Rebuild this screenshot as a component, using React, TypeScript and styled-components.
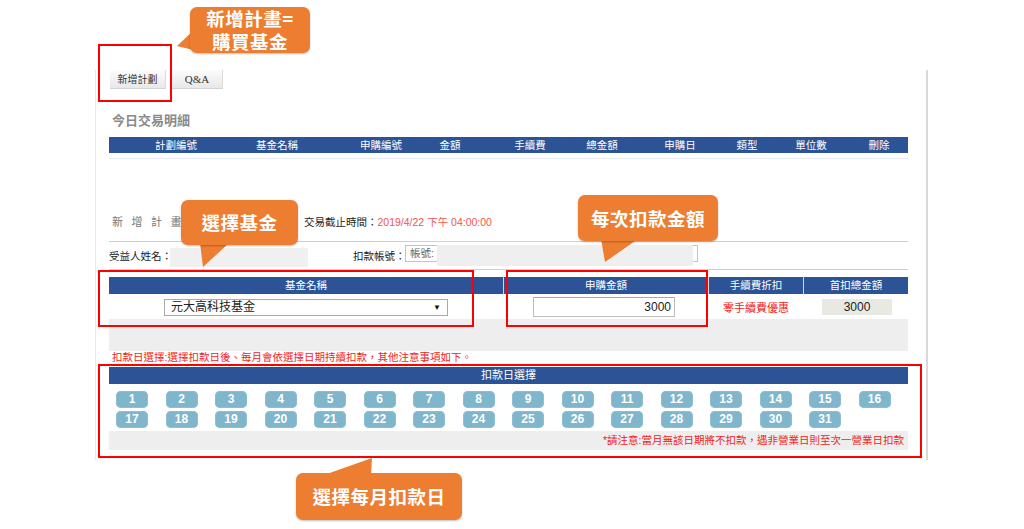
import React from "react";
import styled, { createGlobalStyle } from "styled-components";

const GlobalStyle = createGlobalStyle`
  body {
    margin: 0;
    background: #fff;
    font-family: "Liberation Sans", "Noto Sans CJK TC", sans-serif;
  }
`;

const BLUE = "#2b5396";
const ORANGE = "#ed7d31";

const todayCols: [string, number][] = [
  ["計劃編號", 58],
  ["基金名稱", 144],
  ["申購編號", 64],
  ["金額", 74],
  ["手續費", 86],
  ["總金額", 58],
  ["申購日", 98],
  ["類型", 36],
  ["單位數", 92],
  ["刪除", 44],
];

const days = Array.from({ length: 31 }, (_, i) => i + 1);

const Page = styled.div`
  position: relative;
  width: 1024px;
  height: 529px;
  overflow: hidden;
  box-sizing: border-box;
  padding-top: 70px;
  background: #fff;
`;

const Frame = styled.div`
  box-sizing: border-box;
  width: 833px;
  height: 390px;
  margin-left: 95px;
  padding: 0 18px 0 13px;
  border-left: 1px solid #e8e8e8;
  border-right: 2px solid #d8d8d8;
  display: flex;
  flex-direction: column;
`;

const Tabs = styled.div`
  display: flex;
  gap: 6px;
  height: 19px;
  margin-left: 1px;
`;

const Tab = styled.div<{ $w: number; $serif?: boolean }>`
  box-sizing: border-box;
  width: ${(p) => p.$w}px;
  height: 19px;
  background: linear-gradient(#fcfcfc, #e8e8e8);
  border-right: 1px solid #dcdcdc;
  border-bottom: 1px solid #d4d4d4;
  font-family: ${(p) =>
    p.$serif ? `"Liberation Serif", serif` : `"Liberation Sans", "Noto Sans CJK TC", sans-serif`};
  font-size: ${(p) => (p.$serif ? 11 : 10)}px;
  line-height: 19px;
  text-align: center;
  color: #333;
`;

const Title = styled.div`
  margin-top: 24px;
  font-size: 13px;
  line-height: 16px;
  font-weight: bold;
  color: #8a8a8a;
  padding-left: 3px;
`;

const BlueBar = styled.div`
  background: ${BLUE};
  color: #fff;
  font-size: 10.5px;
  height: 16px;
  line-height: 16px;
`;

const TodayHead = styled(BlueBar)`
  margin-top: 8px;
  display: grid;
  grid-template-columns: ${todayCols.map((c) => `${c[1]}px`).join(" ")};
  padding-left: 38px;
`;

const HeadCell = styled.div`
  text-align: center;
  white-space: nowrap;
`;

const EmptyRow = styled.div`
  height: 5px;
  border-bottom: 1px solid #e6ebf4;
`;

const SectionHead = styled.div`
  margin-top: 53px;
  display: flex;
  align-items: center;
  padding: 2px 0 11px;
  line-height: 16px;
  border-bottom: 1px solid #cfcfcf;
`;

const SectionTitle = styled.div`
  width: 192px;
  padding-left: 3px;
  font-size: 11px;
  letter-spacing: 8.5px;
  color: #777;
`;

const Deadline = styled.div`
  font-size: 10.5px;
  color: #222;
`;

const RedText = styled.span<{ $soft?: boolean }>`
  color: ${(p) => (p.$soft ? "#f2554d" : "#f21c1c")};
`;

const BeneRow = styled.div`
  height: 27px;
  display: flex;
  align-items: center;
  border-bottom: 1px solid #cfcfcf;
  font-size: 10.5px;
  color: #222;
`;

const Label = styled.div<{ $w: number; $ml?: number }>`
  width: ${(p) => p.$w}px;
  margin-left: ${(p) => p.$ml ?? 0}px;
  white-space: nowrap;
`;

const NameMask = styled.div`
  width: 138px;
  height: 19px;
  margin-top: 3px;
  background: #f0f0f0;
`;

const AccountInput = styled.div`
  position: relative;
  box-sizing: border-box;
  width: 293px;
  height: 17px;
  margin-top: -4px;
  border: 1px solid #c4c4c4;
  padding-left: 4px;
  line-height: 15px;
  color: #666;
  font-size: 10.5px;
`;

const AccountMask = styled.div`
  position: absolute;
  left: 31px;
  top: -1px;
  width: 256px;
  height: 21px;
  background: #efefef;
`;

const MainTable = styled.div`
  margin-top: 7px;
  display: flex;
  flex-direction: column;
`;

const mainCols = "394px 204px 94px 1fr";

const MainHead = styled(BlueBar)`
  display: grid;
  grid-template-columns: ${mainCols};
  gap: 1px;
  background: #ccd5e6;
  height: 17px;
  line-height: 17px;
`;

const MainHeadCell = styled.div`
  background: ${BLUE};
  text-align: center;
`;

const MainRow = styled.div`
  display: grid;
  grid-template-columns: ${mainCols};
  gap: 1px;
  height: 25px;
  align-items: center;
  justify-items: center;
`;

const SelectBox = styled.div`
  position: relative;
  box-sizing: border-box;
  width: 284px;
  height: 17px;
  border: 1px solid #a9a9a9;
  padding-left: 6px;
  font-size: 12px;
  line-height: 15px;
  color: #222;
  margin-top: 2px;

  &::after {
    content: "▼";
    position: absolute;
    right: 6px;
    top: 0;
    font-size: 8px;
    color: #111;
  }
`;

const AmountInput = styled.div`
  box-sizing: border-box;
  width: 142px;
  height: 20px;
  margin-right: 4px;
  border: 1px solid #bdbdbd;
  border-top-color: #a8a8a8;
  text-align: right;
  padding-right: 3px;
  font-size: 12px;
  line-height: 18px;
  color: #222;
`;

const FeeText = styled.div`
  font-size: 11px;
  color: #f21c1c;
`;

const TotalBox = styled.div`
  width: 70px;
  height: 16px;
  margin-left: 2px;
  background: #e9e9e4;
  text-align: center;
  font-size: 12px;
  line-height: 16px;
  color: #222;
`;

const GrayPanel = styled.div`
  height: 32px;
  background: #eeeeee;
`;

const Note = styled.div`
  height: 12px;
  padding-left: 3px;
  font-size: 10.5px;
  line-height: 12px;
  color: #f21c1c;
  white-space: nowrap;
`;

const DaySection = styled.div`
  margin-top: 4px;
  display: flex;
  flex-direction: column;
`;

const DayHead = styled(BlueBar)`
  height: 17px;
  line-height: 17px;
  text-align: center;
  font-size: 11px;
`;

const DayGrid = styled.div`
  display: grid;
  grid-template-columns: repeat(16, 1fr);
  grid-auto-rows: 17px;
  row-gap: 3px;
  padding: 7px 0 3px 7px;
`;

const DayButton = styled.div`
  width: 32px;
  height: 17px;
  border-radius: 5px;
  background: #80b6cc;
  box-shadow: inset 0 0 0 1px #8dbfd3;
  color: #fff;
  font-weight: bold;
  font-size: 12px;
  line-height: 17px;
  text-align: center;
`;

const DayFoot = styled.div`
  height: 19px;
  background: #eeeeee;
  text-align: right;
  padding-right: 4px;
  font-size: 10.5px;
  line-height: 19px;
  color: #f21c1c;
`;

const Highlight = styled.div<{ $x: number; $y: number; $w: number; $h: number }>`
  position: absolute;
  left: ${(p) => p.$x}px;
  top: ${(p) => p.$y}px;
  width: ${(p) => p.$w}px;
  height: ${(p) => p.$h}px;
  box-sizing: border-box;
  border: 2px solid #ff0000;
  pointer-events: none;
`;

const Tails = styled.svg`
  position: absolute;
  left: 0;
  top: 0;
  pointer-events: none;
`;

const Bubble = styled.div<{ $x: number; $y: number; $w: number; $h: number }>`
  position: absolute;
  left: ${(p) => p.$x}px;
  top: ${(p) => p.$y}px;
  width: ${(p) => p.$w}px;
  height: ${(p) => p.$h}px;
  box-sizing: border-box;
  border-radius: 7px;
  background: ${ORANGE};
  box-shadow: 0 1px 2px rgba(0, 0, 0, 0.25);
  display: flex;
  align-items: center;
  justify-content: center;
  text-align: center;
  white-space: pre-line;
  color: #fff;
  font-family: "Noto Sans CJK TC", sans-serif;
  font-weight: bold;
  font-size: 18.5px;
  line-height: 23px;
  letter-spacing: 0.5px;
`;

const callouts = [
  { x: 190, y: 7, w: 120, h: 46, text: "新增計畫=\n購買基金", tail: "194,30 206,53 177,46" },
  { x: 181, y: 200, w: 117, h: 45, text: "選擇基金", tail: "200,243 229,243 203,267" },
  { x: 578, y: 195, w: 140, h: 46, text: "每次扣款金額", tail: "601,239 638,239 605,262" },
  { x: 296, y: 473, w: 166, h: 47, text: "選擇每月扣款日", tail: "324,475 371,475 372,458" },
];

export default function App() {
  return (
    <Page>
      <GlobalStyle />
      <Frame>
        <Tabs>
          <Tab $w={56}>新增計劃</Tab>
          <Tab $w={51} $serif>
            Q&amp;A
          </Tab>
        </Tabs>

        <Title>今日交易明細</Title>
        <TodayHead>
          {todayCols.map(([name]) => (
            <HeadCell key={name}>{name}</HeadCell>
          ))}
        </TodayHead>
        <EmptyRow />

        <SectionHead>
          <SectionTitle>新增計畫</SectionTitle>
          <Deadline>
            交易截止時間：<RedText $soft>2019/4/22 下午 04:00:00</RedText>
          </Deadline>
        </SectionHead>

        <BeneRow>
          <Label $w={61}>受益人姓名：</Label>
          <NameMask />
          <Label $w={52} $ml={45}>
            扣款帳號：
          </Label>
          <AccountInput>
            帳號:
            <AccountMask />
          </AccountInput>
        </BeneRow>

        <MainTable>
          <MainHead>
            <MainHeadCell>基金名稱</MainHeadCell>
            <MainHeadCell>申購金額</MainHeadCell>
            <MainHeadCell>手續費折扣</MainHeadCell>
            <MainHeadCell>首扣總金額</MainHeadCell>
          </MainHead>
          <MainRow>
            <SelectBox>元大高科技基金</SelectBox>
            <AmountInput>3000</AmountInput>
            <FeeText>零手續費優惠</FeeText>
            <TotalBox>3000</TotalBox>
          </MainRow>
          <GrayPanel />
        </MainTable>

        <Note>扣款日選擇:選擇扣款日後、每月會依選擇日期持續扣款，其他注意事項如下。</Note>

        <DaySection>
          <DayHead>扣款日選擇</DayHead>
          <DayGrid>
            {days.map((d) => (
              <DayButton key={d}>{d}</DayButton>
            ))}
          </DayGrid>
          <DayFoot>*請注意:當月無該日期將不扣款，遇非營業日則至次一營業日扣款</DayFoot>
        </DaySection>
      </Frame>

      <Highlight $x={98} $y={44} $w={74} $h={58} />
      <Highlight $x={98} $y={270} $w={376} $h={57} />
      <Highlight $x={506} $y={270} $w={202} $h={57} />
      <Highlight $x={98} $y={364} $w={824} $h={94} />

      <Tails width={1024} height={529}>
        {callouts.map((c) => (
          <polygon key={c.tail} points={c.tail} fill={ORANGE} />
        ))}
      </Tails>
      {callouts.map((c) => (
        <Bubble key={c.tail} $x={c.x} $y={c.y} $w={c.w} $h={c.h}>
          {c.text}
        </Bubble>
      ))}
    </Page>
  );
}
